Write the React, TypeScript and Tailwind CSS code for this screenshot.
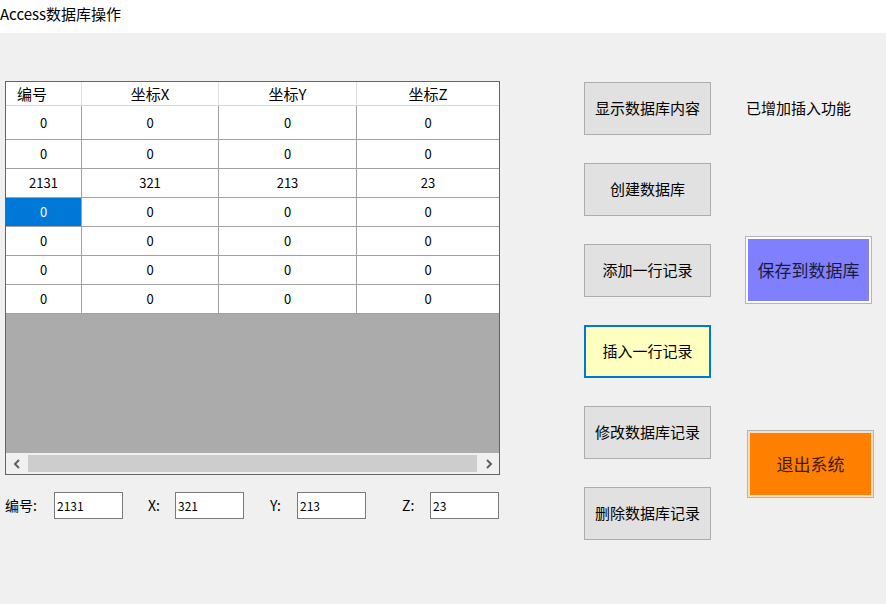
import React from "react";

const cjk = { fontFamily: '"Noto Sans CJK SC", "Noto Sans", sans-serif' };

const rows = [
  ["0", "0", "0", "0"],
  ["0", "0", "0", "0"],
  ["2131", "321", "213", "23"],
  ["0", "0", "0", "0"],
  ["0", "0", "0", "0"],
  ["0", "0", "0", "0"],
  ["0", "0", "0", "0"],
];

const cols = "grid grid-cols-[76px_137px_138px_1fr]";

function DataGrid() {
  return (
    <div className="w-[495px] h-[394px] border border-[#646464] bg-[#ababab] flex flex-col">
      {/* header */}
      <div className={`${cols} h-[24px] bg-white border-b border-[#d5d5d5] text-[15px] text-black`} style={cjk}>
        <div className="border-r border-[#e0e0e0] pl-[11px] leading-[24px]">编号</div>
        <div className="border-r border-[#e0e0e0] text-center leading-[24px]">坐标X</div>
        <div className="border-r border-[#e0e0e0] text-center leading-[24px]">坐标Y</div>
        <div className="text-center leading-[24px]">坐标Z</div>
      </div>
      {rows.map((r, i) => (
        <div key={i} className={`${cols} ${i === 0 ? "h-[34px]" : "h-[29px]"} bg-white text-[13px]`} style={cjk}>
          {r.map((c, j) => (
            <div
              key={j}
              className={`flex items-center justify-center border-b border-[#a0a0a0] ${j < 3 ? "border-r" : ""} ${
                i === 3 && j === 0 ? "bg-[#0078d7] text-white" : "text-black"
              }`}
            >
              {c}
            </div>
          ))}
        </div>
      ))}
      <div className="flex-1" />
      {/* horizontal scrollbar */}
      <div className="h-[21px] bg-[#f0f0f0] flex items-center">
        <div className="w-[21px] flex justify-center">
          <svg width="8" height="10" viewBox="0 0 8 10">
            <path d="M6 1 L2 5 L6 9" stroke="#606060" strokeWidth="2" fill="none" />
          </svg>
        </div>
        <div className="flex-1 h-[17px] bg-[#cdcdcd] mx-[1px]" />
        <div className="w-[21px] flex justify-center">
          <svg width="8" height="10" viewBox="0 0 8 10">
            <path d="M2 1 L6 5 L2 9" stroke="#606060" strokeWidth="2" fill="none" />
          </svg>
        </div>
      </div>
    </div>
  );
}

function Field({ label, value, labelW }: { label: string; value: string; labelW: string }) {
  return (
    <div className="flex items-center">
      <span className={`${labelW} text-[14px] text-black`} style={cjk}>
        {label}
      </span>
      <div className="w-[69px] h-[27px] border border-[#7a7a7a] bg-white pl-[2px] text-[12px] leading-[25px] text-black" style={cjk}>
        {value}
      </div>
    </div>
  );
}

function Btn({ text, active }: { text: string; active?: boolean }) {
  return (
    <div
      className={`w-[127px] h-[53px] flex items-center justify-center text-[15px] text-black ${
        active ? "border-2 border-[#0078d7] bg-[#ffffc0]" : "border border-[#adadad] bg-[#e1e1e1]"
      }`}
      style={cjk}
    >
      {text}
    </div>
  );
}

export default function App() {
  return (
    <div className="w-[886px] h-[604px] bg-[#f0f0f0] overflow-hidden">
      <div className="h-[33px] bg-white text-[15px] text-black leading-[28px]" style={cjk}>
        Access数据库操作
      </div>
      <div className="flex pt-[48px]">
        {/* left: grid and fields */}
        <div className="ml-[5px] w-[495px]">
          <DataGrid />
          <div className="flex mt-[17px]">
            <Field label="编号:" value="2131" labelW="w-[49px]" />
            <div className="ml-[25px]">
              <Field label="X:" value="321" labelW="w-[27px]" />
            </div>
            <div className="ml-[26px]">
              <Field label="Y:" value="213" labelW="w-[27px]" />
            </div>
            <div className="ml-[36px]">
              <Field label="Z:" value="23" labelW="w-[28px]" />
            </div>
          </div>
        </div>
        {/* middle: action buttons */}
        <div className="ml-[84px] mt-[1px] flex flex-col gap-[28px]">
          <Btn text="显示数据库内容" />
          <Btn text="创建数据库" />
          <Btn text="添加一行记录" />
          <Btn text="插入一行记录" active />
          <Btn text="修改数据库记录" />
          <Btn text="删除数据库记录" />
        </div>
        {/* right */}
        <div className="ml-[34px] flex flex-col">
          <div className="mt-[17px] pl-[1px] text-[15px] text-black h-[20px] leading-[20px]" style={cjk}>
            已增加插入功能
          </div>
          <div className="mt-[118px] w-[127px] h-[68px] border border-[#b4b4b4] p-[2px] bg-white">
            <div className="w-full h-full bg-[#8080ff] flex items-center justify-center text-[17px] text-[#1a1a40]" style={cjk}>
              保存到数据库
            </div>
          </div>
          <div className="mt-[126px] ml-[2px] w-[127px] h-[68px] border border-[#b4b4b4] p-[2px] bg-[#f7e0c0]">
            <div className="w-full h-full bg-[#ff8000] flex items-center justify-center text-[17px] text-[#401a00]" style={cjk}>
              退出系统
            </div>
          </div>
        </div>
      </div>
    </div>
  );
}
